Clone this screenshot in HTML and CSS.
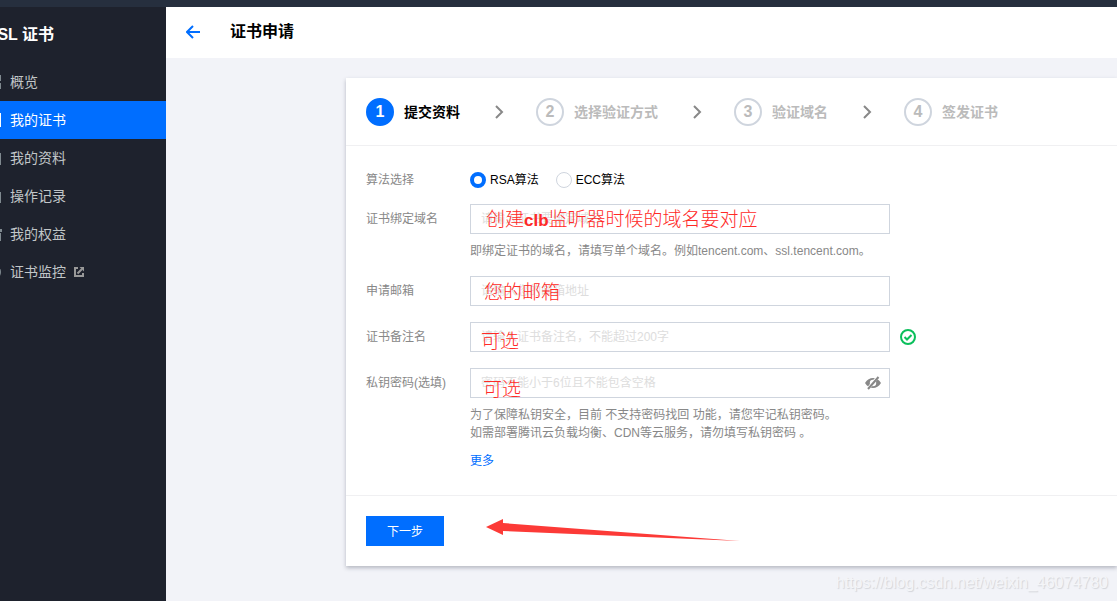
FILE: index.html
```html
<!DOCTYPE html>
<html lang="zh-CN">
<head>
<meta charset="utf-8">
<title>证书申请</title>
<link rel="stylesheet" href="styles.css">
</head>
<body>
<div class="topbar"></div>
<div class="layout">
  <aside class="sidebar">
    <h2 class="sidebar-title"><span class="sidebar-title-text">SSL 证书</span></h2>
    <nav class="menu">
      <a class="menu-item" href="#"><svg class="menu-icon" viewBox="0 0 16 16"><path d="M1 1h6v6H1zM9 1h6v6H9zM1 9h6v6H1zM9 9h6v6H9z"/></svg>概览</a>
      <a class="menu-item active" href="#"><svg class="menu-icon" viewBox="0 0 16 16"><path d="M1 1h14v14H1zM3 3v10h11V3z" fill-rule="evenodd"/></svg>我的证书</a>
      <a class="menu-item" href="#"><svg class="menu-icon" viewBox="0 0 16 16"><path d="M1 3h14v12H1zM3 5v8h11V5z" fill-rule="evenodd"/></svg>我的资料</a>
      <a class="menu-item" href="#"><svg class="menu-icon" viewBox="0 0 16 16"><path d="M1 4h14v11H1zM3 6v7h11V6z" fill-rule="evenodd"/></svg>操作记录</a>
      <a class="menu-item" href="#"><svg class="menu-icon" viewBox="0 0 16 16"><path d="M0 3h16v3H0zM1 7h14v8H1z"/></svg>我的权益</a>
      <a class="menu-item" href="#"><svg class="menu-icon" viewBox="0 0 16 16"><path d="M8 1a7 7 0 1 1 0 14A7 7 0 0 1 8 1z"/></svg>证书监控<svg class="external" viewBox="0 0 10 10"><path d="M4 1H1v8h8V6M3.500 6.500L8 2" /><path class="external-tip" d="M5.500 0H10v4.500z"/></svg></a>
    </nav>
  </aside>
  <main class="main">
    <header class="page-header">
      <a class="back" href="#" aria-label="返回"><svg viewBox="0 0 16 16"><path d="M7 2L1 8l6 6M1 8h13"/></svg></a>
      <h1 class="page-title">证书申请</h1>
    </header>
    <section class="card">
      <ol class="steps">
        <li class="step current"><span class="step-num">1</span>提交资料</li>
        <li class="chevron"><svg viewBox="0 0 10 16"><path d="M2 2l6 6-6 6"/></svg></li>
        <li class="step"><span class="step-num">2</span>选择验证方式</li>
        <li class="chevron"><svg viewBox="0 0 10 16"><path d="M2 2l6 6-6 6"/></svg></li>
        <li class="step"><span class="step-num">3</span>验证域名</li>
        <li class="chevron"><svg viewBox="0 0 10 16"><path d="M2 2l6 6-6 6"/></svg></li>
        <li class="step"><span class="step-num">4</span>签发证书</li>
      </ol>
      <form class="form" id="apply">
        <div class="row row-text" role="radiogroup" aria-labelledby="algo">
          <span class="label" id="algo">算法选择</span>
          <div class="radios">
            <label class="radio"><input type="radio" name="algo" checked>RSA算法</label>
            <label class="radio"><input type="radio" name="algo">ECC算法</label>
          </div>
        </div>
        <div class="row">
          <label class="label" for="domain">证书绑定域名</label>
          <div class="control">
            <div class="field"><input class="input" id="domain" type="text" placeholder="请输入证书要绑定域名"><span class="note note-domain">创建<b>clb</b>监听器时候的域名要对应</span></div>
            <p class="hint">即绑定证书的域名，请填写单个域名。例如tencent.com、ssl.tencent.com。</p>
          </div>
        </div>
        <div class="row">
          <label class="label" for="email">申请邮箱</label>
          <div class="control"><div class="field"><input class="input" id="email" type="email" placeholder="请输入您的邮箱地址"><span class="note note-email">您的邮箱</span></div></div>
        </div>
        <div class="row">
          <label class="label" for="remark">证书备注名</label>
          <div class="control"><div class="field"><input class="input" id="remark" type="text" placeholder="请输入证书备注名，不能超过200字"><span class="note note-remark">可选</span></div></div>
          <svg class="ok" viewBox="0 0 16 16"><circle cx="8" cy="8" r="7"/><path d="M4.500 8l2.500 2.500 4.500-4.500"/></svg>
        </div>
        <div class="row">
          <label class="label" for="pwd">私钥密码(选填)</label>
          <div class="control">
            <div class="field"><input class="input" id="pwd" type="password" placeholder="密码不能小于6位且不能包含空格"><span class="note note-pwd">可选</span>
              <button class="eye" type="button" aria-label="显示密码"><svg viewBox="0 0 16 14"><path class="eye-fill" fill-rule="evenodd" d="M0 7C2 3.500 5 2 8 2s6 1.500 8 5c-2 3.500-5 5-8 5S2 10.500 0 7zM8 3.800a3.200 3.200 0 1 0 0 6.400 3.200 3.200 0 0 0 0-6.400z"/><path class="eye-gap" d="M2 14L13.500 0"/><path class="eye-line" d="M3 13L13.500 1"/></svg></button>
            </div>
            <p class="hint">为了保障私钥安全，目前 不支持密码找回 功能，请您牢记私钥密码。<br>如需部署腾讯云负载均衡、CDN等云服务，请勿填写私钥密码 。</p>
            <a class="more" href="#">更多</a>
          </div>
        </div>
      </form>
      <footer class="actions">
        <button class="next" type="submit" form="apply">下一步</button>
        <svg class="arrow" viewBox="0 0 254 26"><path d="M0 9L17 1v4L254 23 17 13v4z"/></svg>
      </footer>
    </section>
  </main>
</div>
<div class="watermark">https://blog.csdn.net/weixin_46074780</div>
</body>
</html>
```

FILE: styles.css
```css
* { box-sizing: border-box; }
body {
  margin: 0;
  min-height: 100vh;
  display: flex;
  flex-direction: column;
  overflow: hidden;
  font: 12px/18px "Liberation Sans", "Noto Sans CJK SC", sans-serif;
  color: #000;
  background: #f2f3f8;
}
h1, h2, p, ol { margin: 0; padding: 0; }
a { text-decoration: none; }
button, input { font: inherit; }
.topbar { height: 7px; background: #262f3e; }
.layout { flex: 1; display: flex; }

.sidebar { flex: 0 0 166px; background: #1e222d; overflow: hidden; }
.sidebar-title {
  display: flex;
  justify-content: flex-end;
  width: 54px;
  height: 56px;
  align-items: center;
  font-size: 16px;
  color: #fff;
  white-space: nowrap;
}
.menu-item {
  display: flex;
  align-items: center;
  height: 38px;
  font-size: 14px;
  color: #c1c6c8;
}
.menu { display: flex; flex-direction: column; }
.menu-icon { width: 16px; height: 16px; margin: 0 8px 0 -14px; fill: #7f898f; }
.active { background: #006eff; color: #fff; }
.active .menu-icon { fill: #fff; }
.external { width: 10px; height: 10px; margin-left: 8px; fill: none; stroke: #999; stroke-width: 2; }
.external-tip { fill: #999; stroke: none; }

.main { flex: 1; min-width: 0; }
.page-header { display: flex; align-items: center; gap: 28px; height: 51px; padding: 0 20px 2px; background: #fff; }
.back { width: 16px; height: 16px; }
.back svg { display: block; fill: none; stroke: #006eff; stroke-width: 2; }
.page-title { font-size: 16px; line-height: 24px; }

.card { margin: 20px 0 0 180px; background: #fff; box-shadow: 0 2px 4px rgba(54, 58, 80, 0.32); }
.steps { display: flex; align-items: center; height: 68px; padding: 0 20px; list-style: none; border-bottom: 1px solid #f0f0f2; }
.step { display: flex; align-items: center; gap: 10px; font-size: 14px; font-weight: bold; color: #bbb; white-space: nowrap; }
.step-num {
  display: flex;
  align-items: center;
  justify-content: center;
  width: 28px;
  height: 28px;
  border: 2px solid #cfd5de;
  border-radius: 50%;
  font-size: 16px;
}
.current { color: #000; }
.current .step-num { border-color: #006eff; background: #006eff; color: #fff; }
.chevron { display: flex; width: 76px; padding-left: 34px; }
.chevron svg { width: 10px; height: 16px; fill: none; stroke: #888; stroke-width: 2; }

.form { display: flex; flex-direction: column; gap: 16px; padding: 24px 20px 25px; border-bottom: 1px solid #f0f0f2; }
.row { display: flex; align-items: flex-start; }
.label { flex: 0 0 104px; line-height: 30px; color: #888; }
.row-text .label { line-height: 20px; }
.row-text { height: 18px; }
.radios { display: flex; gap: 17px; }
.radio { display: flex; align-items: center; gap: 4px; line-height: 20px; }
.radio input { appearance: none; width: 16px; height: 16px; margin: 0; border: 1px solid #cfd5de; border-radius: 50%; background: #fff; }
.radio input:checked { border: 4px solid #006eff; }
.control { flex: 0 1 420px; }
.field { position: relative; }
.input { display: block; width: 100%; height: 30px; padding: 0 10px; border: 1px solid #cfd5de; border-radius: 0; background: #fff; }
.input::placeholder { color: #ddd; opacity: 1; }
.hint { margin-top: 8px; color: #888; white-space: nowrap; }
.more { display: block; margin-top: 10px; color: #006eff; }
.note { position: absolute; font-size: 19px; font-weight: 300; line-height: 24px; color: #ff2a27; white-space: nowrap; pointer-events: none; }
.note b { font-size: 17px; font-weight: 700; }
.note-domain { left: 16px; top: 4px; }
.note-email { left: 14px; top: 5px; }
.note-remark { left: 11px; top: 8px; }
.note-pwd { left: 13px; top: 10px; }
.ok { width: 16px; height: 16px; margin: 7px 0 0 10px; fill: none; stroke: #0abf5b; stroke-width: 2; }
.eye { position: absolute; right: 9px; top: 8px; width: 16px; height: 14px; padding: 0; border: 0; background: none; }
.eye svg { display: block; fill: none; }
.eye .eye-fill { fill: #888; }
.eye-gap { stroke: #fff; stroke-width: 3; }
.eye-line { stroke: #888; stroke-width: 2; }

.actions { display: flex; align-items: center; padding: 20px; }
.next { width: 78px; height: 30px; padding: 2px 0 0; border: 0; background: #006eff; color: #fff; }
.arrow { width: 254px; height: 26px; margin-left: 42px; fill: #fc3a37; }
.watermark { position: absolute; right: 9px; bottom: 8px; font-size: 16px; line-height: 20px; color: #f4f5f8; text-shadow: 1px 1px 1px #d2d4d9; }
```
